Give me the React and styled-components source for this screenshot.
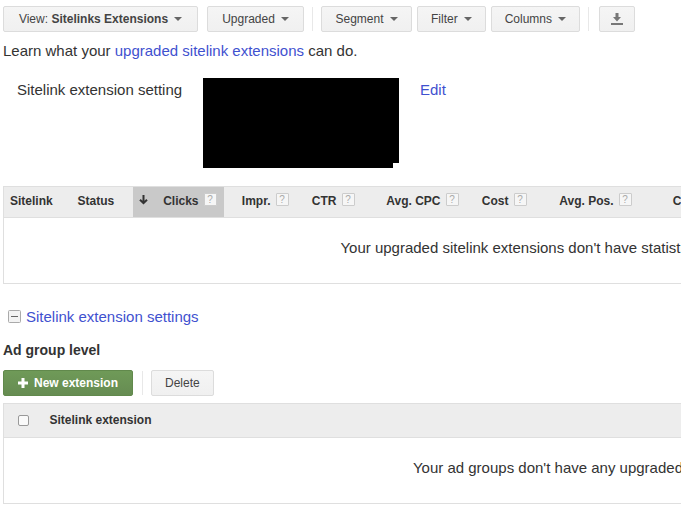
import styled, { createGlobalStyle } from "styled-components";

const GlobalStyle = createGlobalStyle`
  body {
    margin: 0;
    background: #fff;
    color: #333;
    font-family: "Liberation Sans", Arial, Helvetica, sans-serif;
    font-size: 15px;
    line-height: 20px;
    overflow-x: hidden;
  }
`;

const Page = styled.main`
  padding: 6px 0 16px 3px;
  overflow: hidden;
`;

const Toolbar = styled.div`
  display: flex;
  align-items: center;
`;

const Button = styled.button`
  display: flex;
  align-items: center;
  justify-content: center;
  flex: none;
  gap: 6px;
  height: 26px;
  min-width: ${({ $minWidth }) => $minWidth || 36}px;
  padding: 0 13px;
  margin-right: ${({ $gap }) => $gap || 0}px;
  border: 1px solid #dcdcdc;
  border-radius: 2px;
  background: linear-gradient(#f5f5f5, #f0f0f0);
  color: #444;
  font-family: inherit;
  font-size: 12px;
  white-space: nowrap;
  cursor: pointer;

  &:hover {
    border-color: #c6c6c6;
  }
`;

const IconButton = styled(Button)`
  padding: 0 10px;
`;

const PrimaryButton = styled(Button)`
  border-color: #61894c;
  background: linear-gradient(#6f9a58, #668c52);
  color: #fff;
  font-weight: 700;

  &:hover {
    border-color: #4d703b;
  }
`;

const Caret = styled.span`
  border: 4px solid transparent;
  border-top-color: #666;
  border-bottom: 0;
`;

const Divider = styled.span`
  flex: none;
  width: 1px;
  height: 24px;
  margin-right: ${({ $gap }) => $gap || 8}px;
  background: #e8e8e8;
`;

const TextLink = styled.a`
  color: #3f51cf;
  text-decoration: none;

  &:hover {
    text-decoration: underline;
  }
`;

const Intro = styled.p`
  margin: 9px 0 0;
`;

const Setting = styled.section`
  display: flex;
  align-items: flex-start;
  padding: 17px 0 0 14px;
`;

const SettingLabel = styled.span`
  width: 186px;
  padding-top: 2px;
`;

const Redacted = styled.div`
  width: 196px;
  height: 90px;
  margin-right: 21px;
  background: #000;
  clip-path: polygon(0 0, 100% 0, 100% 85px, 190px 85px, 190px 100%, 0 100%);
`;

const EditLink = styled(TextLink)`
  padding-top: 2px;
`;

const StatsSection = styled.section`
  margin-top: 18px;
`;

const Table = styled.table`
  width: 100%;
  min-width: 1220px;
  table-layout: fixed;
  border-collapse: collapse;
  border: 1px solid #dfdfdf;
`;

const HeadCell = styled.th`
  height: ${({ $height }) => $height || 31}px;
  width: ${({ $width }) => ($width ? `${$width}px` : "auto")};
  box-sizing: border-box;
  padding: 0 7px 2px 6px;
  border-bottom: 1px solid #dfdfdf;
  background: ${({ $sorted }) => ($sorted ? "#c9c9c9" : "#ededed")};
  font-size: 12px;
  line-height: 16px;
  text-align: left;
  white-space: nowrap;
`;

const CheckCell = styled(HeadCell)`
  padding: 0 6px;
`;

const HeadContent = styled.div`
  display: flex;
  align-items: flex-start;
  justify-content: flex-end;
  gap: 5px;
`;

const SortIcon = styled.svg`
  margin: 2px auto 0 0;
`;

const Help = styled.button`
  width: 13px;
  height: 13px;
  padding: 0;
  border: 1px solid #ccc;
  border-radius: 1px;
  background: #f6f6f6;
  color: #aaa;
  font-family: inherit;
  font-size: 10px;
  line-height: 11px;
`;

const EmptyCell = styled.td`
  height: 66px;
  padding: 0 0 6px;
  box-sizing: border-box;
  text-align: center;
`;

const SettingsToggle = styled.div`
  display: flex;
  align-items: center;
  gap: 5px;
  margin-top: 23px;
  padding-left: 5px;
`;

const CollapseButton = styled.button`
  display: flex;
  padding: 0 0 2px;
  border: 0;
  background: none;
`;

const LevelTitle = styled.h2`
  margin: 13px 0 10px;
  font-size: 14px;
  line-height: 20px;
`;

const Actions = styled(Toolbar)`
  margin-bottom: 7px;
`;

const Checkbox = styled.input`
  display: block;
  appearance: none;
  width: 11px;
  height: 11px;
  margin: 0 auto;
  border: 1px solid #999;
  border-radius: 2px;
  background: #fafafa;
`;

const metrics = [
  { label: "Clicks", width: 91, sorted: true },
  { label: "Impr.", width: 72 },
  { label: "CTR", width: 66 },
  { label: "Avg. CPC", width: 104 },
  { label: "Cost", width: 68 },
  { label: "Avg. Pos.", width: 105 },
  { label: "Conv. (1-per-click)", width: 163 },
];

function MenuButton({ children, gap, minWidth }) {
  return (
    <Button type="button" aria-haspopup="menu" $gap={gap} $minWidth={minWidth}>
      <span>{children}</span>
      <Caret />
    </Button>
  );
}

function StatsTable() {
  return (
    <Table>
      <thead>
        <tr>
          <HeadCell $width={68}>Sitelink</HeadCell>
          <HeadCell $width={61}>Status</HeadCell>
          {metrics.map(({ label, width, sorted }) => (
            <HeadCell key={label} $width={width} $sorted={sorted}>
              <HeadContent>
                {sorted && (
                  <SortIcon width="9" height="10" viewBox="0 0 9 10">
                    <path d="M4.5 0v8M1 4.7l3.5 3.5L8 4.7" fill="none" stroke="#333" strokeWidth="2" />
                  </SortIcon>
                )}
                <span>{label}</span>
                <Help type="button" aria-label={`About ${label}`}>?</Help>
              </HeadContent>
            </HeadCell>
          ))}
          <HeadCell />
        </tr>
      </thead>
      <tbody>
        <tr>
          <EmptyCell colSpan={metrics.length + 3}>
            Your upgraded sitelink extensions don't have statistics for the selected date range.
          </EmptyCell>
        </tr>
      </tbody>
    </Table>
  );
}

function ExtensionTable() {
  return (
    <Table>
      <thead>
        <tr>
          <CheckCell $width={40} $height={34}>
            <Checkbox type="checkbox" aria-label="Select all extensions" />
          </CheckCell>
          <HeadCell $height={34}>Sitelink extension</HeadCell>
        </tr>
      </thead>
      <tbody>
        <tr>
          <EmptyCell colSpan={2}>
            Your ad groups don't have any upgraded sitelink extensions.
          </EmptyCell>
        </tr>
      </tbody>
    </Table>
  );
}

export default function App() {
  return (
    <>
      <GlobalStyle />
      <Page>
        <Toolbar>
          <MenuButton gap={9} minWidth={195}>
            View: <b>Sitelinks Extensions</b>
          </MenuButton>
          <MenuButton gap={8} minWidth={97}>Upgraded</MenuButton>
          <Divider />
          <MenuButton gap={5} minWidth={91}>Segment</MenuButton>
          <MenuButton gap={5}>Filter</MenuButton>
          <MenuButton gap={8}>Columns</MenuButton>
          <Divider $gap={10} />
          <IconButton type="button" aria-label="Download">
            <svg width="12" height="12" viewBox="0 0 12 12" fill="#777">
              <path d="M4.500 0h3v4H10L6 8.500 2 4h2.500z" />
              <path d="M0 10h12v2H0z" />
            </svg>
          </IconButton>
        </Toolbar>

        <Intro>
          Learn what your <TextLink href="#learn">upgraded sitelink extensions</TextLink> can do.
        </Intro>

        <Setting>
          <SettingLabel>Sitelink extension setting</SettingLabel>
          <Redacted />
          <EditLink href="#edit">Edit</EditLink>
        </Setting>

        <StatsSection>
          <StatsTable />
        </StatsSection>

        <SettingsToggle>
          <CollapseButton type="button" aria-label="Collapse settings">
            <svg width="13" height="13" viewBox="0 0 13 13">
              <rect x="0.5" y="0.5" width="12" height="12" rx="1" fill="#f3f3f3" stroke="#aaa" />
              <path d="M3 6.5h7" stroke="#666" />
            </svg>
          </CollapseButton>
          <TextLink href="#settings">Sitelink extension settings</TextLink>
        </SettingsToggle>

        <LevelTitle>Ad group level</LevelTitle>
        <Actions>
          <PrimaryButton type="button" $gap={9} $minWidth={130}>
            <svg width="10" height="10" viewBox="0 0 10 10">
              <path d="M5 0v10M0 5h10" stroke="#fff" strokeWidth="3" />
            </svg>
            New extension
          </PrimaryButton>
          <Divider />
          <Button type="button">Delete</Button>
        </Actions>
        <ExtensionTable />
      </Page>
    </>
  );
}
